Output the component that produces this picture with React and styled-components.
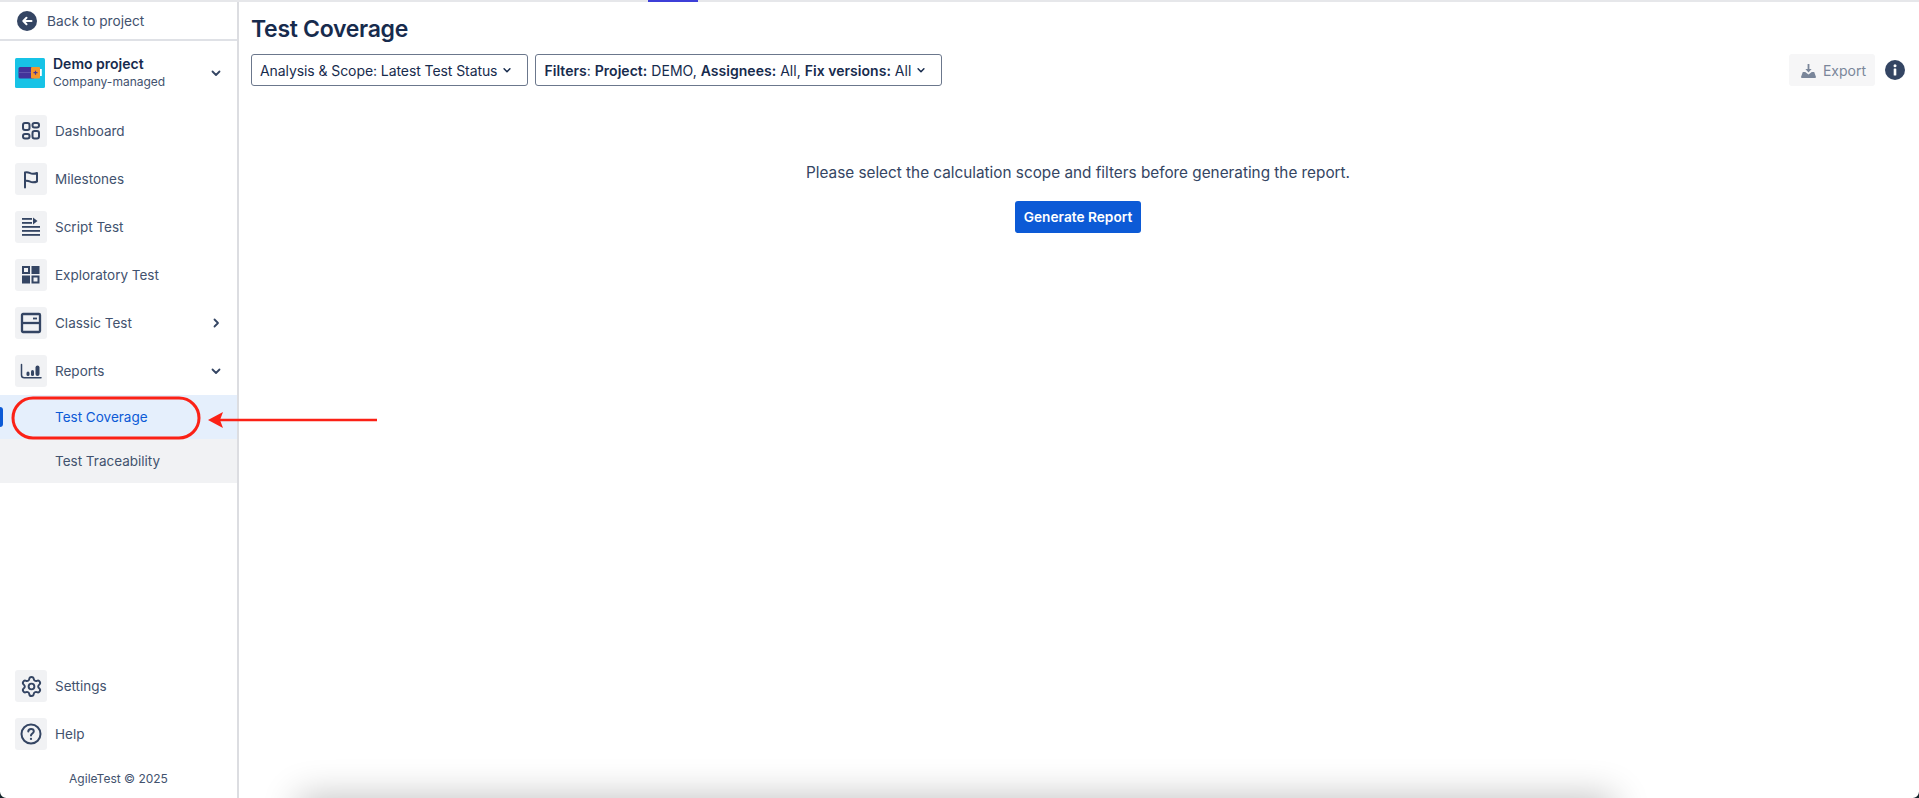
import React from 'react';
import styled, { createGlobalStyle } from 'styled-components';
import { Settings } from 'lucide-react';

const GlobalStyle = createGlobalStyle`
	html, body {
		margin: 0;
		padding: 0;
		height: 100%;
		background: #fff;
		font-family: Inter, "Liberation Sans", sans-serif;
		color: #344563;
		overflow: hidden;
	}
`

const Page = styled.div`
	position: relative;
	display: flex;
	flex-direction: column;
	height: 100vh;
	overflow: hidden;
`

const TopRule = styled.div`
	flex: 0 0 2px;
	background: #e6e7ea;
	padding-left: 648px;
`

const TopMarker = styled.div`
	width: 50px;
	height: 2px;
	background: #3d3fd8;
`

const Body = styled.div`
	flex: 1;
	min-height: 0;
	display: flex;
`

const Sidebar = styled.aside`
	flex: 0 0 239px;
	box-sizing: border-box;
	display: flex;
	flex-direction: column;
	border-right: 2px solid #dcdde1;
`

const BackLink = styled.div`
	flex: 0 0 39px;
	box-sizing: border-box;
	display: flex;
	align-items: center;
	gap: 10px;
	padding: 0 0 0 17px;
	border-bottom: 2px solid #dfe1e6;
	font-size: 13.7px;
	color: #42526e;
`

const ProjectRow = styled.div`
	display: flex;
	align-items: center;
	height: 30px;
	margin: 17px 0 27px;
	padding: 0 15px 0 15px;
`

const ProjectText = styled.div`
	flex: 1;
	margin-left: 8px;
`

const ProjectName = styled.div`
	font-size: 14px;
	line-height: 18px;
	font-weight: 600;
	color: #172b4d;
`

const ProjectType = styled.div`
	font-size: 12px;
	line-height: 18px;
	color: #42526e;
`

const Menu = styled.nav`
	display: flex;
	flex-direction: column;
	gap: 16px;
	padding: 0 15px;
`

const MenuItem = styled.div`
	display: flex;
	align-items: center;
	height: 32px;
	font-size: 13.5px;
	color: #42526e;
`

const IconTile = styled.span`
	flex: 0 0 32px;
	height: 32px;
	display: flex;
	align-items: center;
	justify-content: center;
	border-radius: 3px;
	background: #f1f2f4;
	margin-right: 8px;
`

const MenuLabel = styled.span`
	flex: 1;
`

const SubMenu = styled.div`
	margin-top: 8px;
	background: #f1f2f4;
`

const SubItem = styled.div`
	position: relative;
	height: 44px;
	display: flex;
	align-items: center;
	padding-left: 55px;
	font-size: 13.5px;
	color: ${p => (p.$active ? '#0c5ad6' : '#42526e')};
	background: ${p => (p.$active ? '#e5effc' : 'transparent')};

	${p => p.$active && `
		&::before {
			content: "";
			position: absolute;
			left: 0;
			top: 12px;
			width: 3px;
			height: 20px;
			border-radius: 0 3px 3px 0;
			background: #0c5ad6;
		}
	`}
`

const SidebarFooter = styled.div`
	margin-top: auto;
	display: flex;
	flex-direction: column;
	padding-bottom: 10px;
`

const Copyright = styled.div`
	margin-top: 20px;
	text-align: center;
	font-size: 12px;
	line-height: 18px;
	color: #42526e;
`

const Main = styled.main`
	flex: 1;
	min-width: 0;
	display: flex;
	flex-direction: column;
	padding: 0 14px 0 12px;
`

const Title = styled.h1`
	margin: 12px 0 0;
	font-size: 23px;
	line-height: 30px;
	font-weight: 600;
	letter-spacing: -0.3px;
	color: #172b4d;
`

const Toolbar = styled.div`
	display: flex;
	align-items: center;
	gap: 7px;
	margin-top: 10px;
`

const Dropdown = styled.div`
	display: flex;
	align-items: center;
	height: 32px;
	box-sizing: border-box;
	padding: 0 15px 0 8px;
	gap: 5px;
	border: 1px solid #6b778c;
	border-radius: 3px;
	font-size: 14px;
	letter-spacing: ${p => (p.$tight ? '-0.08px' : '0.03px')};
	color: #172b4d;
	white-space: nowrap;

	b {
		font-weight: 600;
	}
`

const ExportButton = styled.div`
	margin-left: auto;
	display: flex;
	align-items: center;
	gap: 7px;
	height: 32px;
	padding: 0 9px 0 12px;
	border-radius: 3px;
	background: #f6f6f7;
	font-size: 14px;
	color: #7a869a;
`

const InfoBadge = styled.span`
	display: flex;
	margin-left: 3px;
`

const EmptyState = styled.div`
	display: flex;
	flex-direction: column;
	align-items: center;
	margin-top: 76px;
`

const Message = styled.p`
	margin: 0;
	font-size: 15.3px;
	line-height: 22px;
	color: #344563;
`

const GenerateButton = styled.button`
	margin-top: 17px;
	height: 32px;
	width: 126px;
	padding: 0;
	border: 0;
	border-radius: 3px;
	background: #0c5ad6;
	color: #fff;
	font: 600 13.7px Inter, "Liberation Sans", sans-serif;
`

const BottomShadow = styled.div`
	position: absolute;
	left: 300px;
	bottom: -60px;
	width: 1312px;
	height: 60px;
	box-shadow: 0 0 36px 2px rgba(0, 0, 0, 0.24);
`

const WindowCorner = styled.div`
	position: absolute;
	bottom: 0;
	width: 6px;
	height: 6px;
	${p => (p.$right ? 'right: 0;' : 'left: 0;')}
	background: radial-gradient(circle at ${p => (p.$right ? '0' : '100%')} 0, transparent 5.4px, #14262b 6.2px);
`

const Annotation = styled.svg`
	position: absolute;
	left: 0;
	top: 0;
	width: 400px;
	height: 500px;
	pointer-events: none;
`

const Stroke = ({ children, width = 2, size = 20, box = '0 0 20 20' }) => (
	<svg width={size} height={size} viewBox={box} fill="none" stroke="#344563" strokeWidth={width} strokeLinecap="round" strokeLinejoin="round">
		{children}
	</svg>
);

const Chevron = ({ right, small }) => (
	<svg width={small ? 10 : 12} height={small ? 10 : 12} viewBox="0 0 12 12" fill="none" stroke={small ? '#172b4d' : '#344563'} strokeWidth="1.8" strokeLinecap="round" strokeLinejoin="round">
		<path d={right ? 'M4.500 2.500 8 6l-3.500 3.500' : 'M2.500 4.500 6 8l3.500-3.500'} />
	</svg>
);

const DashboardIcon = () => (
	<Stroke>
		<rect x="2" y="2" width="6.500" height="7" rx="2" />
		<rect x="11.500" y="2" width="6.500" height="4.500" rx="2" />
		<rect x="2" y="13" width="6.500" height="4.500" rx="2" />
		<rect x="11.500" y="10" width="6.500" height="7.500" rx="2" />
	</Stroke>
);

const FlagIcon = () => (
	<Stroke>
		<path d="M4 18.500V3.500c3.500-1.500 4.500 1.300 8 1.300 1.500 0 3-.3 4-.8v8.500c-1 .5-2.500.8-4 .8-3.500 0-4.500-2.800-8-1.300" />
	</Stroke>
);

const ScriptIcon = () => (
	<svg width="20" height="20" viewBox="0 0 20 20" fill="#344563">
		<rect x="1" y="1" width="10" height="1.800" />
		<rect x="1" y="5" width="10" height="1.800" />
		<path d="M12 0.500 16.500 4 12 7.500z" />
		<rect x="1" y="9" width="18" height="1.800" />
		<rect x="1" y="13" width="18" height="1.800" />
		<rect x="1" y="17" width="18" height="1.800" />
	</svg>
);

const ExploreIcon = () => (
	<svg width="20" height="20" viewBox="0 0 20 20" fill="#344563">
		<path fillRule="evenodd" d="M1 1h8v8H1zM3 3v4h4V3z" />
		<rect x="10.500" y="1" width="8" height="8" />
		<rect x="1" y="10.500" width="8" height="8" />
		<path fillRule="evenodd" d="M10.500 10.500h8v8h-8zM12.500 12.500v4h4v-4z" />
	</svg>
);

const ClassicIcon = () => (
	<svg width="22" height="22" viewBox="0 0 22 22" fill="none" stroke="#344563" strokeWidth="2.300">
		<rect x="2" y="2" width="18" height="18" rx="1" />
		<path d="M2 11h18" />
		<path d="M13 6.500h4" strokeWidth="1.800" />
	</svg>
);

const ReportsIcon = () => (
	<svg width="22" height="22" viewBox="0 0 22 22" fill="none" stroke="#344563">
		<path d="M1.500 4.500V15c0 1.700 1 2.800 2.700 2.800H21" strokeWidth="1.500" strokeLinecap="round" />
		<rect x="6.500" y="11.500" width="3" height="4.500" rx="1.500" fill="#344563" stroke="none" />
		<rect x="11" y="10" width="3" height="6" rx="1.500" fill="#344563" stroke="none" />
		<rect x="15.500" y="5.500" width="4" height="10.500" rx="2" fill="#344563" stroke="none" />
	</svg>
);

const HelpIcon = () => (
	<Stroke size={22} box="0 0 22 22" width={2}>
		<circle cx="11" cy="11" r="9.500" />
		<path d="M8.300 8.500c0-1.600 1.200-2.600 2.800-2.600s2.700 1 2.700 2.400c0 2.300-2.800 2.200-2.800 4.300" />
		<path d="M11 15.800v.1" strokeWidth="2.200" />
	</Stroke>
);

const BackIcon = () => (
	<svg width="20" height="20" viewBox="0 0 20 20">
		<circle cx="10" cy="10" r="10" fill="#344563" />
		<path d="M14.500 10H6.500M9.500 6.800 6.300 10l3.200 3.200" fill="none" stroke="#fff" strokeWidth="2" strokeLinecap="round" strokeLinejoin="round" />
	</svg>
);

const ProjectLogo = () => (
	<svg width="30" height="30" viewBox="0 0 30 30">
		<rect width="30" height="30" rx="1.500" fill="#17c3e6" />
		<rect x="3.500" y="9" width="16" height="11.500" rx="1.500" fill="#43339a" />
		<rect x="3.500" y="14" width="13" height="1" fill="#5f52ad" />
		<rect x="16" y="9" width="9" height="11.500" rx="1" fill="#f4962c" />
		<rect x="25" y="11" width="1.800" height="7" fill="#fff" />
		<path d="M18.500 14.700h4M20.500 12.700v4" stroke="#43339a" strokeWidth="1.200" />
	</svg>
);

const ExportIcon = () => (
	<svg width="15" height="15" viewBox="0 0 15 15" fill="#7a869a">
		<path d="M6.600 1h1.800v5h2.200L7.500 9.400 4.400 6h2.200z" />
		<path d="M1.800 9h2.400l3.300 2.400L10.800 9h2.400L15 14a1 1 0 0 1-1 1H1a1 1 0 0 1-1-1z" />
	</svg>
);

const InfoIcon = () => (
	<svg width="20" height="20" viewBox="0 0 20 20">
		<circle cx="10" cy="10" r="10" fill="#344563" />
		<rect x="8.700" y="8.500" width="2.600" height="7" rx=".6" fill="#fff" />
		<circle cx="10" cy="5.800" r="1.500" fill="#fff" />
	</svg>
);

const menuItems = [
	{ label: 'Dashboard', icon: <DashboardIcon /> },
	{ label: 'Milestones', icon: <FlagIcon /> },
	{ label: 'Script Test', icon: <ScriptIcon /> },
	{ label: 'Exploratory Test', icon: <ExploreIcon /> },
	{ label: 'Classic Test', icon: <ClassicIcon />, chevron: 'right' },
	{ label: 'Reports', icon: <ReportsIcon />, chevron: 'down' },
];

const App = () => (
	<Page>
		<GlobalStyle />
		<TopRule>
			<TopMarker />
		</TopRule>
		<Body>
			<Sidebar>
				<BackLink>
					<BackIcon />
					Back to project
				</BackLink>
				<ProjectRow>
					<ProjectLogo />
					<ProjectText>
						<ProjectName>Demo project</ProjectName>
						<ProjectType>Company-managed</ProjectType>
					</ProjectText>
					<Chevron />
				</ProjectRow>
				<Menu>
					{menuItems.map(item => (
						<MenuItem key={item.label}>
							<IconTile>{item.icon}</IconTile>
							<MenuLabel>{item.label}</MenuLabel>
							{item.chevron && <Chevron right={item.chevron === 'right'} />}
						</MenuItem>
					))}
				</Menu>
				<SubMenu>
					<SubItem $active>Test Coverage</SubItem>
					<SubItem>Test Traceability</SubItem>
				</SubMenu>
				<SidebarFooter>
					<Menu>
						<MenuItem>
							<IconTile><Settings size={23} color="#344563" strokeWidth={2} /></IconTile>
							Settings
						</MenuItem>
						<MenuItem>
							<IconTile><HelpIcon /></IconTile>
							Help
						</MenuItem>
					</Menu>
					<Copyright>AgileTest © 2025</Copyright>
				</SidebarFooter>
			</Sidebar>
			<Main>
				<Title>Test Coverage</Title>
				<Toolbar>
					<Dropdown $tight>
						Analysis &amp; Scope: Latest Test Status
						<Chevron small />
					</Dropdown>
					<Dropdown>
						<span><b>Filters</b>: <b>Project:</b> DEMO, <b>Assignees:</b> All, <b>Fix versions:</b> All</span>
						<Chevron small />
					</Dropdown>
					<ExportButton>
						<ExportIcon />
						Export
					</ExportButton>
					<InfoBadge><InfoIcon /></InfoBadge>
				</Toolbar>
				<EmptyState>
					<Message>Please select the calculation scope and filters before generating the report.</Message>
					<GenerateButton>Generate Report</GenerateButton>
				</EmptyState>
			</Main>
		</Body>
		<BottomShadow />
		<WindowCorner />
		<WindowCorner $right />
		<Annotation viewBox="0 0 400 500">
			<rect x="13" y="398" width="186" height="40" rx="20" fill="none" stroke="#fb2116" strokeWidth="3" />
			<path d="M377 420H218" stroke="#fb2116" strokeWidth="2.500" />
			<path d="M208 420 223 412 220 420 223 428z" fill="#fb2116" />
		</Annotation>
	</Page>
);

export default App;
